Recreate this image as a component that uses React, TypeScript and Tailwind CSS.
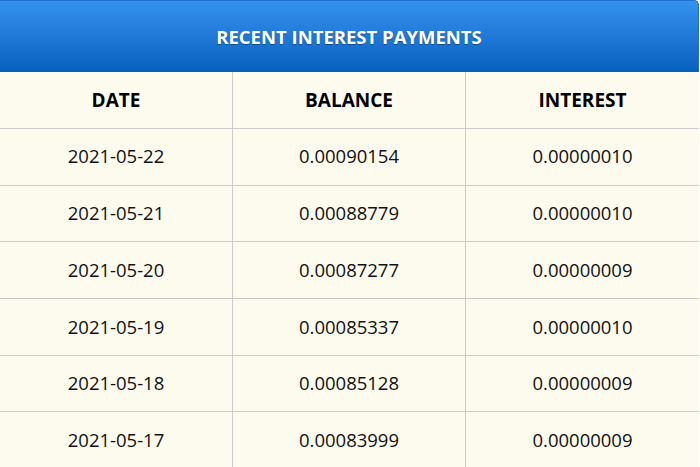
import React from 'react'

const rows = [
  ['2021-05-22', '0.00090154', '0.00000010'],
  ['2021-05-21', '0.00088779', '0.00000010'],
  ['2021-05-20', '0.00087277', '0.00000009'],
  ['2021-05-19', '0.00085337', '0.00000010'],
  ['2021-05-18', '0.00085128', '0.00000009'],
  ['2021-05-17', '0.00083999', '0.00000009'],
]

const App = () => {
  return (
    <div className="w-[700px] h-[467px] overflow-hidden bg-white" style={{ fontFamily: '"Open Sans", sans-serif' }}>
      <div className="w-[699px] bg-[#fdfbee]">
        {/* Title bar */}
        <div className="h-[72px] flex items-center justify-center rounded-tr-[5px] border-t border-r border-[#1c6fcc] bg-gradient-to-b from-[#3592ef] to-[#0660be]">
          <h2 className="text-[18.5px] font-bold text-white [text-shadow:0_1px_1px_rgba(0,0,0,0.35)]">RECENT INTEREST PAYMENTS</h2>
        </div>

        {/* Column headers */}
        <div className="grid grid-cols-3 h-[57px] border-b border-[#cccccc] text-[19px] font-bold text-black">
          <div className="flex items-center justify-center border-r border-[#cccccc]">DATE</div>
          <div className="flex items-center justify-center border-r border-[#cccccc]">BALANCE</div>
          <div className="flex items-center justify-center">INTEREST</div>
        </div>

        {/* Rows */}
        {rows.map((r) => (
          <div key={r[0]} className="grid grid-cols-3 h-[56.7px] border-b border-[#cccccc] text-[18.5px] text-[#111111]">
            <div className="flex items-center justify-center border-r border-[#cccccc] pb-[1px]">{r[0]}</div>
            <div className="flex items-center justify-center border-r border-[#cccccc] pb-[1px]">{r[1]}</div>
            <div className="flex items-center justify-center pb-[1px]">{r[2]}</div>
          </div>
        ))}
      </div>
    </div>
  )
}

export default App
